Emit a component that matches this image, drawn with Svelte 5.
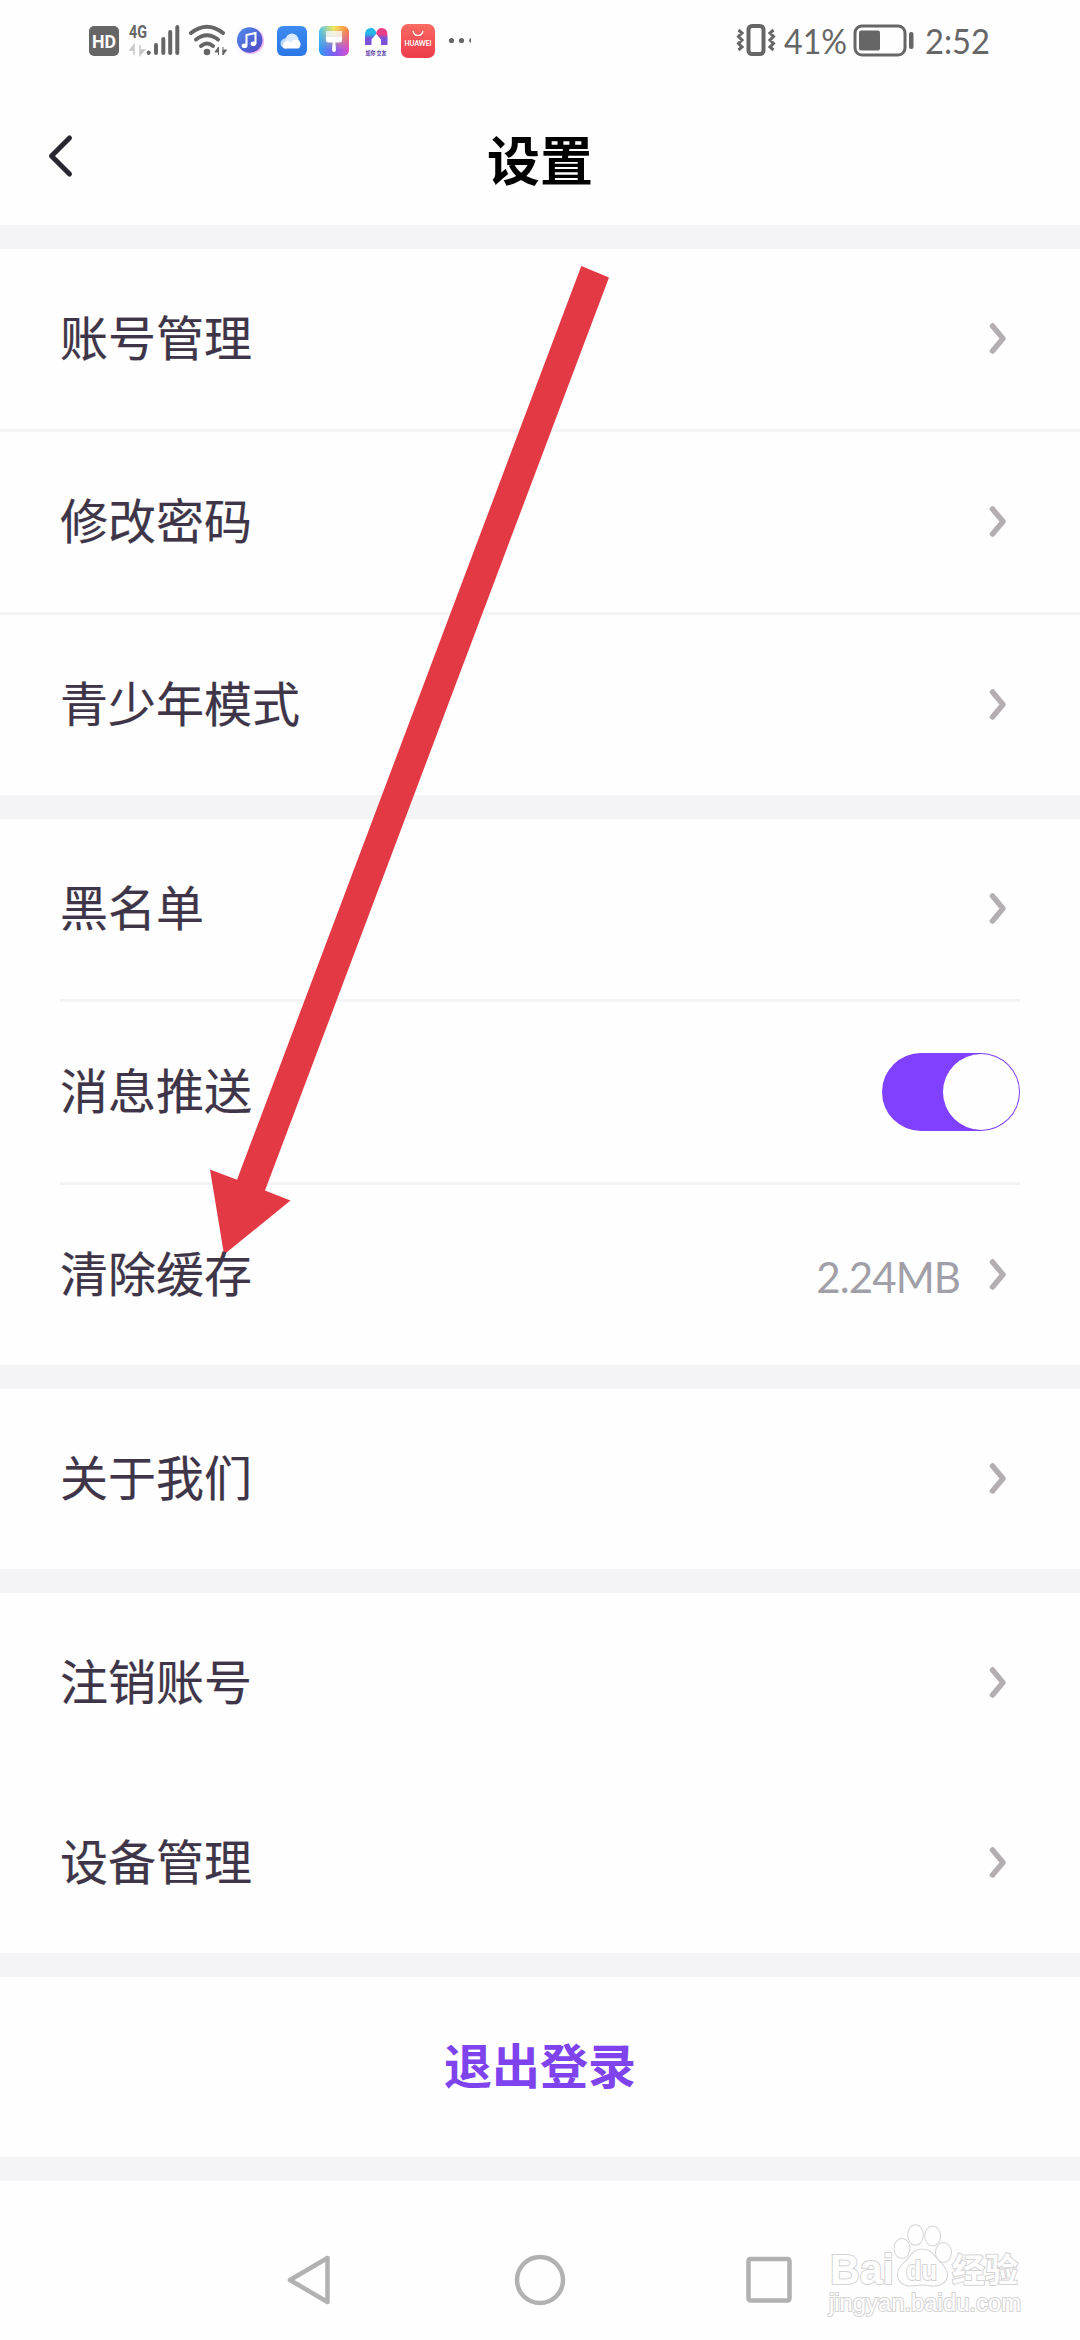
<script>
  let pushEnabled = $state(true);

  const groups = [
    {
      inset: false,
      divided: true,
      items: [{ label: '账号管理' }, { label: '修改密码' }, { label: '青少年模式' }]
    },
    {
      inset: true,
      divided: true,
      items: [
        { label: '黑名单' },
        { label: '消息推送', toggle: true },
        { label: '清除缓存', value: '2.24MB' }
      ]
    },
    { inset: false, divided: false, items: [{ label: '关于我们' }] },
    { inset: false, divided: false, items: [{ label: '注销账号' }, { label: '设备管理' }] }
  ];
</script>

<div class="screen">
  <div class="status-bar">
    <svg class="status-left" width="400" height="44" viewBox="80 18 400 44">
      <defs>
        <linearGradient id="music" x1="0" y1="0" x2="1" y2="1">
          <stop offset="0" stop-color="#4f8cec" />
          <stop offset="1" stop-color="#5146c4" />
        </linearGradient>
        <linearGradient id="cloud" x1="0" y1="0" x2="0" y2="1">
          <stop offset="0" stop-color="#3d8af0" />
          <stop offset="1" stop-color="#2b77e6" />
        </linearGradient>
        <linearGradient id="brushTop" x1="0" y1="0" x2="1" y2="0">
          <stop offset="0" stop-color="#4fc3ee" />
          <stop offset="0.5" stop-color="#f3e75c" />
          <stop offset="1" stop-color="#fb7a3c" />
        </linearGradient>
        <linearGradient id="brushBottom" x1="0" y1="0" x2="1" y2="0">
          <stop offset="0" stop-color="#2f9df2" />
          <stop offset="0.5" stop-color="#7d5df0" />
          <stop offset="1" stop-color="#d94fd0" />
        </linearGradient>
        <linearGradient id="fade" x1="0" y1="0" x2="0" y2="1">
          <stop offset="0.1" stop-color="#000" />
          <stop offset="0.8" stop-color="#fff" />
        </linearGradient>
        <mask id="brushMask"><rect x="319" y="26" width="30" height="30" fill="url(#fade)" /></mask>
        <linearGradient id="store" x1="0" y1="0" x2="0" y2="1">
          <stop offset="0" stop-color="#fb6b62" />
          <stop offset="1" stop-color="#ee3a4c" />
        </linearGradient>
        <linearGradient id="legLeft" x1="0" y1="0" x2="0" y2="1">
          <stop offset="0.35" stop-color="#22b5e8" />
          <stop offset="0.6" stop-color="#7a52d8" />
        </linearGradient>
        <linearGradient id="legRight" x1="0" y1="0" x2="0" y2="1">
          <stop offset="0.35" stop-color="#ec3d86" />
          <stop offset="0.6" stop-color="#7a52d8" />
        </linearGradient>
      </defs>

      <rect x="89" y="26" width="30" height="30" rx="5" fill="#666" />
      <text x="92" y="48" class="hd" textLength="24" lengthAdjust="spacingAndGlyphs">HD</text>

      <text x="129" y="37.500" class="net" textLength="18" lengthAdjust="spacingAndGlyphs">4G</text>
      <path d="M134 45v10M134 45l-4 5h4zM140 45v10M140 55l4.500-5h-4.500z" fill="#c8c8c8" stroke="#c8c8c8" stroke-width="1.500" />
      <g stroke="#666" stroke-width="4" stroke-linecap="round">
        <path d="M148.700 52.500v.5M156 45v8M163.300 39v14M170.200 32v21M177.300 27v26" />
      </g>

      <g fill="none" stroke="#666" stroke-width="4" stroke-linecap="round">
        <path d="M191 33q16-12.500 32 0" />
        <path d="M196 39.500q11-8.500 22 0" />
        <path d="M201 46q6-5 12 0" />
      </g>
      <circle cx="207" cy="52" r="3.300" fill="#666" />
      <path d="M218.500 47v8M218.500 47l-3.500 5h3.500zM223 47v8M223 55l3.500-5h-3.500z" fill="#666" stroke="#666" stroke-width="1" />

      <rect x="236" y="27" width="28" height="28" rx="6" fill="#faf9fd" />
      <circle cx="251" cy="41" r="13" fill="#edb6f0" />
      <circle cx="249.700" cy="40" r="12.700" fill="url(#music)" />
      <path d="M246.500 45.500V35l9-2v10.500" fill="none" stroke="#fff" stroke-width="2" />
      <ellipse cx="244.500" cy="45.700" rx="2.900" ry="2.300" fill="#fff" />
      <ellipse cx="253.500" cy="43.800" rx="2.900" ry="2.300" fill="#fff" />

      <rect x="277" y="26" width="30" height="30" rx="6" fill="url(#cloud)" />
      <circle cx="285.500" cy="43.500" r="5" fill="#bcdcff" />
      <circle cx="292" cy="40" r="6.500" fill="#d9ebff" />
      <path d="M284 48.500a4.500 4.500 0 0 1 7-6q2-3 5.500-3a4.800 4.800 0 0 1 1.500 9z" fill="#fff" />

      <rect x="319" y="26" width="30" height="30" rx="6" fill="url(#brushTop)" />
      <rect x="319" y="26" width="30" height="30" rx="6" fill="url(#brushBottom)" mask="url(#brushMask)" />
      <path d="M326 31h16v6h-16z" fill="#fff" opacity=".75" />
      <path d="M326 37h16v3q0 2.500-2.500 2.500h-4.200l.7 7.500a2 2 0 0 1-4 0l.7-7.500h-4.200q-2.500 0-2.500-2.500z" fill="#fff" />

      <path d="M365 45V35q0-7 6-7 4 0 5.500 5.500l-5 6V45z" fill="url(#legLeft)" />
      <path d="M387.500 45V35q0-7-6-7-4 0-5.500 5.500l5 6V45z" fill="url(#legRight)" />
      <text x="365.500" y="54.500" class="tiny" textLength="21" lengthAdjust="spacingAndGlyphs">加你 交友</text>

      <rect x="401" y="24" width="34" height="34" rx="7" fill="url(#store)" />
      <path d="M413 31q1 4.500 5 4.500t5-4.500" fill="none" stroke="#fff" stroke-width="1.200" />
      <text x="404.500" y="46" class="brand" textLength="27" lengthAdjust="spacingAndGlyphs">HUAWEI</text>

      <circle cx="451.500" cy="40.500" r="2.600" fill="#666" />
      <circle cx="461.500" cy="40.500" r="2.600" fill="#666" />
      <path d="M471 38a2.600 2.600 0 0 0 0 5z" fill="#666" />
    </svg>

    <svg width="264" height="44" viewBox="732 18 264 44">
      <g fill="none" stroke="#666">
        <rect x="748.500" y="26" width="15" height="28" rx="3.500" stroke-width="4" />
        <path d="M738.500 30l3.500 3-3.500 3.500 3.500 3.500-3.500 3.500 3.500 3.500-3.500 3M773.500 30l-3.500 3 3.500 3.500-3.500 3.500 3.500 3.500-3.500 3.500 3.500 3" stroke-width="3" />
        <rect x="855" y="26" width="50" height="29" rx="7" stroke-width="3" />
      </g>
      <text x="784" y="54" class="clock" textLength="63" lengthAdjust="spacingAndGlyphs">41%</text>
      <rect x="859" y="30.500" width="21" height="20" rx="2" fill="#666" />
      <rect x="909" y="32" width="4.500" height="17" rx="2" fill="#666" />
      <text x="925" y="54" class="clock" textLength="65" lengthAdjust="spacingAndGlyphs">2:52</text>
    </svg>
  </div>

  <header class="header">
    <button class="back" aria-label="返回">
      <svg width="30" height="48" viewBox="0 0 30 48">
        <path d="M24.500 6L6.500 24l18 18" />
      </svg>
    </button>
    <h1>设置</h1>
  </header>

  {#each groups as group}
    <section class="group" class:inset={group.inset} class:divided={group.divided}>
      {#each group.items as item}
        <div class="row">
          <span class="label">{item.label}</span>
          {#if item.toggle}
            <button
              class="switch"
              class:on={pushEnabled}
              aria-label={item.label}
              onclick={() => (pushEnabled = !pushEnabled)}
            >
              <span class="knob"></span>
            </button>
          {:else}
            {#if item.value}
              <span class="value">{item.value}</span>
            {/if}
            <svg class="chevron" width="20" height="34" viewBox="0 0 20 34">
              <path d="M4.500 4l10.500 12.500-10.500 12.500" />
            </svg>
          {/if}
        </div>
      {/each}
    </section>
  {/each}

  <section class="group">
    <button class="logout">退出登录</button>
  </section>

  <nav class="nav-bar">
    <svg width="57" height="60" viewBox="0 0 57 60">
      <path d="M43.500 8v44L6 30z" />
    </svg>
    <svg width="60" height="60" viewBox="0 0 60 60">
      <circle cx="30" cy="30" r="23" />
    </svg>
    <svg width="60" height="60" viewBox="0 0 60 60">
      <rect x="9.500" y="9" width="41" height="41.500" rx="2" />
    </svg>
  </nav>

  <svg class="arrow" width="420" height="1000" viewBox="200 260 420 1000">
    <path d="M581.300 266L609 277.500 265 1190.500 290.500 1200.500 224 1254.500 210 1169.500 237 1179.800z" />
  </svg>

  <svg class="watermark" width="210" height="104" viewBox="822 2216 210 104">
    <text x="830" y="2284" class="wm-name" textLength="64" lengthAdjust="spacingAndGlyphs">Bai</text>
    <ellipse cx="902" cy="2248.500" rx="7.500" ry="9.500" />
    <ellipse cx="915.500" cy="2235" rx="7.300" ry="9.800" />
    <ellipse cx="932.700" cy="2236" rx="7.500" ry="9.500" />
    <ellipse cx="943.500" cy="2252.500" rx="7.500" ry="9.500" />
    <path d="M922 2249.500c-9 0-11 7-16 12-5 4-8 8-8 13 0 7 6 11 12 11 5 0 8-1 12-1s7 1 12 1c7 0 13-4 13-11 0-5-4-9-8-13-5-5-8-12-17-12z" />
    <text x="906" y="2280" class="wm-du" textLength="31" lengthAdjust="spacingAndGlyphs">du</text>
    <text x="952" y="2281.500" class="wm-cn" textLength="66" lengthAdjust="spacingAndGlyphs">经验</text>
    <text x="829" y="2310.500" class="wm-url" textLength="192" lengthAdjust="spacingAndGlyphs">jingyan.baidu.com</text>
  </svg>
</div>

<style>
  :global(body) {
    background: #fefefe;
  }

  .screen {
    position: relative;
    width: 1080px;
    height: 2340px;
    overflow: hidden;
    display: flex;
    flex-direction: column;
    background: #fefefe;
    font-family: 'Noto Sans CJK SC', sans-serif;
    color: #3e3548;
  }

  button {
    border: none;
    padding: 0;
    background: none;
    font-family: inherit;
  }

  .status-bar {
    height: 82px;
    box-sizing: border-box;
    padding: 18px 84px 0 80px;
    display: flex;
    justify-content: space-between;
    align-items: flex-start;
  }

  .hd {
    font: bold 19px Roboto, sans-serif;
    fill: #fff;
  }

  .net {
    font: bold 18px Roboto, sans-serif;
    fill: #666;
  }

  .tiny {
    font: bold 6px 'Noto Sans CJK SC', sans-serif;
    fill: #5b41a8;
  }

  .brand {
    font: bold 7px Lato, sans-serif;
    fill: #fff;
  }

  .clock {
    font: 35px Lato, sans-serif;
    fill: #666;
  }

  .header {
    height: 143px;
    display: grid;
    grid-template-columns: 120px 1fr 120px;
    align-items: center;
  }

  .back {
    display: flex;
    padding-left: 45px;
    height: 48px;
    margin-top: 4px;
  }

  .back path {
    fill: none;
    stroke: #272631;
    stroke-width: 5;
    stroke-linecap: round;
    stroke-linejoin: round;
  }

  h1 {
    margin: 8px 0 0;
    font-size: 53px;
    line-height: 80px;
    font-weight: 700;
    text-align: center;
    color: #000;
  }

  .group {
    border-top: 24px solid #f4f4f7;
  }

  .row {
    height: 180px;
    box-sizing: border-box;
    padding: 0 60px;
    display: flex;
    align-items: center;
  }

  .divided .row + .row {
    height: 183px;
    border-top: 3px solid #f4f4f6;
  }

  .inset .row + .row {
    margin: 0 60px;
    padding: 0;
  }

  .label {
    position: relative;
    z-index: 2;
    flex: 1;
    padding-bottom: 8px;
    font-size: 48px;
    line-height: 72px;
    -webkit-text-stroke: 0.2px #3e3548;
  }

  .value {
    margin: 3px 28px 0 0;
    font: 42px/60px Lato, sans-serif;
    letter-spacing: -0.9px;
    color: #a19fa7;
  }

  .chevron {
    margin-right: 12px;
    fill: none;
    stroke: #b3aeb2;
    stroke-width: 5.5;
    stroke-linecap: round;
    stroke-linejoin: round;
  }

  .switch {
    width: 138px;
    height: 78px;
    box-sizing: border-box;
    padding: 1px;
    display: flex;
    border-radius: 39px;
    background: #dcdce2;
  }

  .switch.on {
    justify-content: flex-end;
    background: #7f40ff;
  }

  .knob {
    width: 76px;
    height: 76px;
    border-radius: 50%;
    background: #fefefe;
  }

  .logout {
    width: 100%;
    height: 180px;
    padding-bottom: 8px;
    font-size: 48px;
    font-weight: 700;
    color: #7f43ee;
  }

  .nav-bar {
    flex: 1;
    box-sizing: border-box;
    border-top: 24px solid #f4f4f7;
    padding: 69px 281px 0 284px;
    display: flex;
    justify-content: space-between;
  }

  .nav-bar svg {
    fill: none;
    stroke: #b1b1b1;
    stroke-width: 4.5;
    stroke-linejoin: round;
  }

  .arrow {
    position: absolute;
    z-index: 1;
    left: 200px;
    top: 260px;
    fill: #e33945;
    pointer-events: none;
  }

  .watermark {
    position: absolute;
    left: 822px;
    top: 2216px;
    fill: #fefefe;
    stroke: #d4d4d4;
    stroke-width: 2;
    paint-order: stroke;
  }

  .wm-name {
    font: bold 42px 'Liberation Sans', sans-serif;
  }

  .wm-du {
    font: bold 27px 'Liberation Sans', sans-serif;
  }

  .wm-cn {
    font: bold 33px 'Noto Sans CJK SC', sans-serif;
  }

  .wm-url {
    font: 23px 'Liberation Sans', sans-serif;
  }
</style>
